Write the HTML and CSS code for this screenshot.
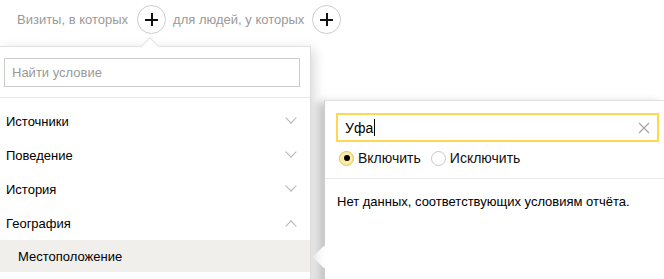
FILE: index.html
```html
<!DOCTYPE html>
<html lang="ru">
<head>
    <meta charset="utf-8">
    <link rel="stylesheet" href="styles.css">
</head>
<body>
    <div class="top-bar">
        <span class="top-text">Визиты, в которых</span>
        <button class="plus-button plus-first"><span class="plus"></span></button>
        <span class="top-text">для людей, у которых</span>
        <button class="plus-button"><span class="plus"></span></button>
    </div>

    <div class="workspace">
        <div class="popup">
            <div class="popup-search">
                <input class="search-input" type="text" placeholder="Найти условие">
            </div>
            <ul class="menu">
                <li class="menu-item">Источники <span class="chevron down"></span></li>
                <li class="menu-item">Поведение <span class="chevron down"></span></li>
                <li class="menu-item">История <span class="chevron down"></span></li>
                <li class="menu-item">География <span class="chevron up"></span></li>
                <li class="menu-item sub selected">Местоположение</li>
            </ul>
        </div>

        <div class="details">
            <div class="details-head">
                <div class="city-input">
                    <span class="city-value">Уфа</span><span class="caret"></span>
                    <svg class="clear" width="12" height="12" viewBox="0 0 12 12">
                        <path d="M1 1 L11 11 M11 1 L1 11" stroke="#a6a6a6" stroke-width="1.2" fill="none"/>
                    </svg>
                </div>
                <div class="radios">
                    <label class="radio checked"><span class="radio-dot"></span>Включить</label>
                    <label class="radio"><span class="radio-dot"></span>Исключить</label>
                </div>
            </div>
            <p class="empty-text">Нет данных, соответствующих условиям отчёта.</p>
        </div>
    </div>
</body>
</html>
```

FILE: styles.css
```css
* {
    margin: 0;
    padding: 0;
    box-sizing: border-box;
}
body {
    width: 664px;
    height: 279px;
    overflow: hidden;
    background: #fff;
    font-family: "Liberation Sans", Arial, sans-serif;
    font-size: 13px;
    color: #000;
}
.top-bar {
    display: flex;
    align-items: center;
    height: 38px;
    padding: 0 0 0 17px;
}
.top-text {
    color: #999;
}
.plus-button {
    position: relative;
    width: 29px;
    height: 29px;
    margin: 0 0 0 8px;
    border: 1px solid #ccc;
    border-radius: 50%;
    background: #fff;
}
.plus-button.plus-first {
    margin: 0 7px 0 9px;
}
.plus {
    position: absolute;
    left: 7px;
    top: 13px;
    width: 13px;
    height: 2px;
    background: #111;
}
.plus::after {
    content: "";
    position: absolute;
    left: 5.5px;
    top: -5.5px;
    width: 2px;
    height: 13px;
    background: #111;
}

.workspace {
    display: flex;
    margin-top: 8px;
}

/* left popup */
.popup {
    position: relative;
    width: 311px;
    height: 240px;
    border-top: 1px solid #e2e2e2;
    border-right: 1px solid #dcdcdc;
    background: #fff;
    box-shadow: 3px 4px 12px rgba(0, 0, 0, 0.16);
    z-index: 2;
}
.popup::before {
    content: "";
    position: absolute;
    top: -7px;
    left: 143px;
    width: 13px;
    height: 13px;
    background: #fff;
    border-top: 1px solid #e2e2e2;
    border-left: 1px solid #e2e2e2;
    transform: rotate(45deg);
}
.popup-search {
    padding: 11px 11px 10px 4px;
    border-bottom: 1px solid #e8e8e8;
}
.search-input {
    display: block;
    width: 296px;
    height: 29px;
    padding: 0 7px;
    border: 1px solid #ccc;
    font-family: inherit;
    font-size: 13px;
    outline: none;
}
.search-input::placeholder {
    color: #999;
}
.menu {
    list-style: none;
    padding-top: 6px;
}
.menu-item {
    display: flex;
    align-items: center;
    justify-content: space-between;
    height: 34px;
    padding: 0 15px 0 6px;
}
.menu-item.sub {
    padding-left: 18px;
    height: 32px;
}
.menu-item.selected {
    background: #f0efec;
}
.chevron {
    width: 8px;
    height: 8px;
    border-right: 1px solid #b5b5b5;
    border-bottom: 1px solid #b5b5b5;
}
.chevron.down {
    transform: translateY(-3px) rotate(45deg);
}
.chevron.up {
    transform: translateY(3px) rotate(-135deg);
}

/* right panel */
.details {
    position: relative;
    flex: 1;
    margin: 54px 0 0 13px;
    height: 190px;
    border-top: 1px solid #e2e2e2;
    border-left: 1px solid #cfcfcf;
    background: #fff;
    box-shadow: -6px 2px 8px rgba(0, 0, 0, 0.22);
}
.details::before {
    content: "";
    position: absolute;
    left: -9px;
    top: 148px;
    width: 16px;
    height: 16px;
    background: #fff;
    transform: rotate(45deg);
}
.details-head {
    position: relative;
    padding: 12px 5px 12px 11px;
    border-bottom: 1px solid #e8e8e8;
}
.city-input {
    display: flex;
    align-items: center;
    height: 29px;
    padding: 0 7px 0 7px;
    border: 2px solid #ffd84f;
}
.city-value {
    font-size: 14px;
}
.caret {
    width: 1px;
    height: 17px;
    margin-left: 1px;
    background: #000;
}
.clear {
    margin-left: auto;
}
.radios {
    display: flex;
    gap: 10px;
    margin-top: 8px;
    padding-left: 3px;
}
.radio {
    display: flex;
    align-items: center;
    gap: 4px;
    font-size: 14px;
    color: #111;
}
.radio-dot {
    position: relative;
    width: 15px;
    height: 15px;
    border: 1px solid #c8c8c8;
    border-radius: 50%;
    background: #fff;
}
.radio.checked .radio-dot {
    background: #ffeba0;
    border-color: #d9c16a;
}
.radio.checked .radio-dot::after {
    content: "";
    position: absolute;
    left: 3.5px;
    top: 3.5px;
    width: 6px;
    height: 6px;
    border-radius: 50%;
    background: #000;
}
.empty-text {
    padding: 15px 12px;
    font-size: 13px;
}
```
